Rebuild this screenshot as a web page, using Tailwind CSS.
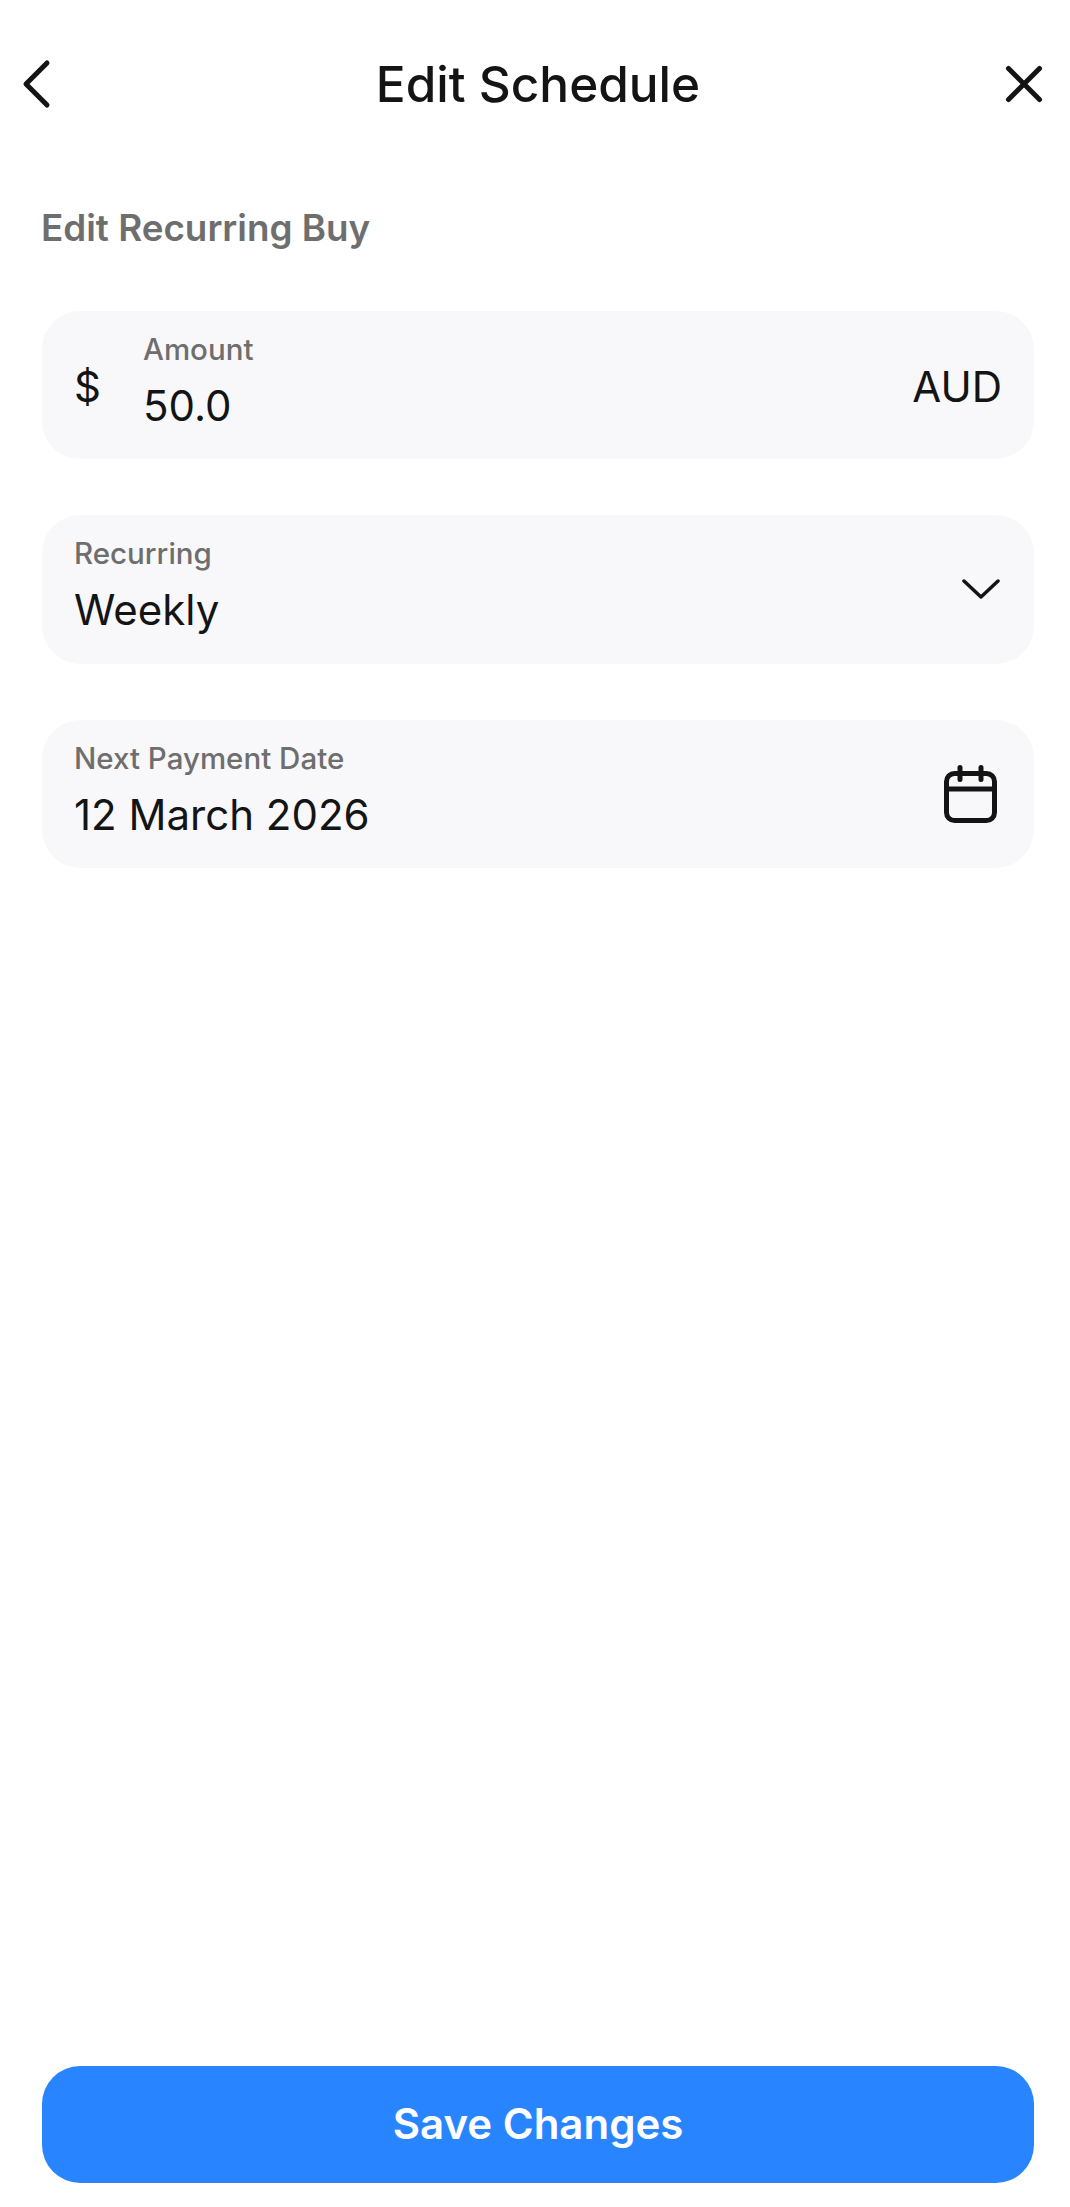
<!DOCTYPE html>
<html lang="en">
<head>
    <meta charset="UTF-8">
    <meta name="viewport" content="width=device-width, initial-scale=1.0">
    <title>Edit Schedule</title>
    <script src="https://cdn.jsdelivr.net/npm/@tailwindcss/browser@4"></script>
</head>
<body class="bg-white font-['Inter',sans-serif]">
    <div class="w-[1070px] h-[2207px] flex flex-col overflow-hidden">
        <!-- header -->
        <div class="h-[168px] grid grid-cols-[1fr_auto_1fr] items-center pl-[42px] pr-[36px]">
            <svg class="w-[32px] h-[52px] -ml-[22px]" viewBox="0 0 32 52" fill="none" stroke="#141414" stroke-width="5" stroke-linecap="round" stroke-linejoin="round"><path d="M27 5 6 26l21 21"/></svg>
            <h1 class="text-[49.5px] leading-[56px] font-medium text-[#141414]">Edit Schedule</h1>
            <svg class="w-[40px] h-[40px] justify-self-end -mr-[10px]" viewBox="0 0 40 40" fill="none" stroke="#141414" stroke-width="5" stroke-linecap="round"><path d="M4.5 4.5l31 31M35.5 4.5l-31 31"/></svg>
        </div>

        <!-- form -->
        <div class="pl-[42px] pr-[36px] flex-1">
            <h2 class="text-[36.8px] leading-[44px] font-semibold text-[#6e6e6e] mt-[38px] mb-[61px] -ml-[1px]">Edit Recurring Buy</h2>

            <div class="flex flex-col gap-[56px]">
                <div class="h-[148px] rounded-[38px] bg-[#f8f8fa] flex items-center pl-[32px] pr-[32px]">
                    <span class="w-[69px] mt-[3px] text-[42px] leading-[50px] text-[#141414]">$</span>
                    <div class="flex-1 flex flex-col gap-[14px] pb-[9px]">
                        <span class="text-[29.5px] leading-[36px] font-medium text-[#6e6e6e]">Amount</span>
                        <span class="text-[42px] leading-[50px] text-[#141414]">50.0</span>
                    </div>
                    <span class="mt-[3px] text-[42px] leading-[50px] text-[#141414]">AUD</span>
                </div>

                <div class="h-[149px] rounded-[38px] bg-[#f8f8fa] flex items-center justify-between pl-[32px] pr-[34px]">
                    <div class="flex flex-col gap-[14px] pb-[9px]">
                        <span class="text-[29.5px] leading-[36px] font-medium text-[#6e6e6e]">Recurring</span>
                        <span class="text-[42px] leading-[50px] text-[#141414]">Weekly</span>
                    </div>
                    <svg class="w-[38px] h-[22px] -mt-[2px]" viewBox="0 0 38 22" fill="none" stroke="#141414" stroke-width="3.5" stroke-linecap="round" stroke-linejoin="round"><path d="M2 3l17 16L36 3"/></svg>
                </div>

                <div class="h-[148px] rounded-[38px] bg-[#f8f8fa] flex items-center justify-between pl-[32px] pr-[37px]">
                    <div class="flex flex-col gap-[14px] pb-[9px]">
                        <span class="text-[29.5px] leading-[36px] font-medium text-[#6e6e6e]">Next Payment Date</span>
                        <span class="text-[42px] leading-[50px] text-[#141414]">12 March 2026</span>
                    </div>
                    <svg class="w-[53px] h-[58px]" viewBox="0 0 53 58" fill="none" stroke="#141414" stroke-width="5" stroke-linecap="round" stroke-linejoin="round"><rect x="2.5" y="8.5" width="48" height="47" rx="8"/><path d="M2.5 24h48M16 2.5v12M37 2.5v12"/></svg>
                </div>
            </div>
        </div>

        <!-- save button -->
        <div class="pl-[42px] pr-[36px] pb-[24px]">
            <button class="w-full h-[117px] rounded-[38px] bg-[#2985ff] text-white text-[42px] font-semibold pb-[2px]">Save Changes</button>
        </div>
    </div>
</body>
</html>
